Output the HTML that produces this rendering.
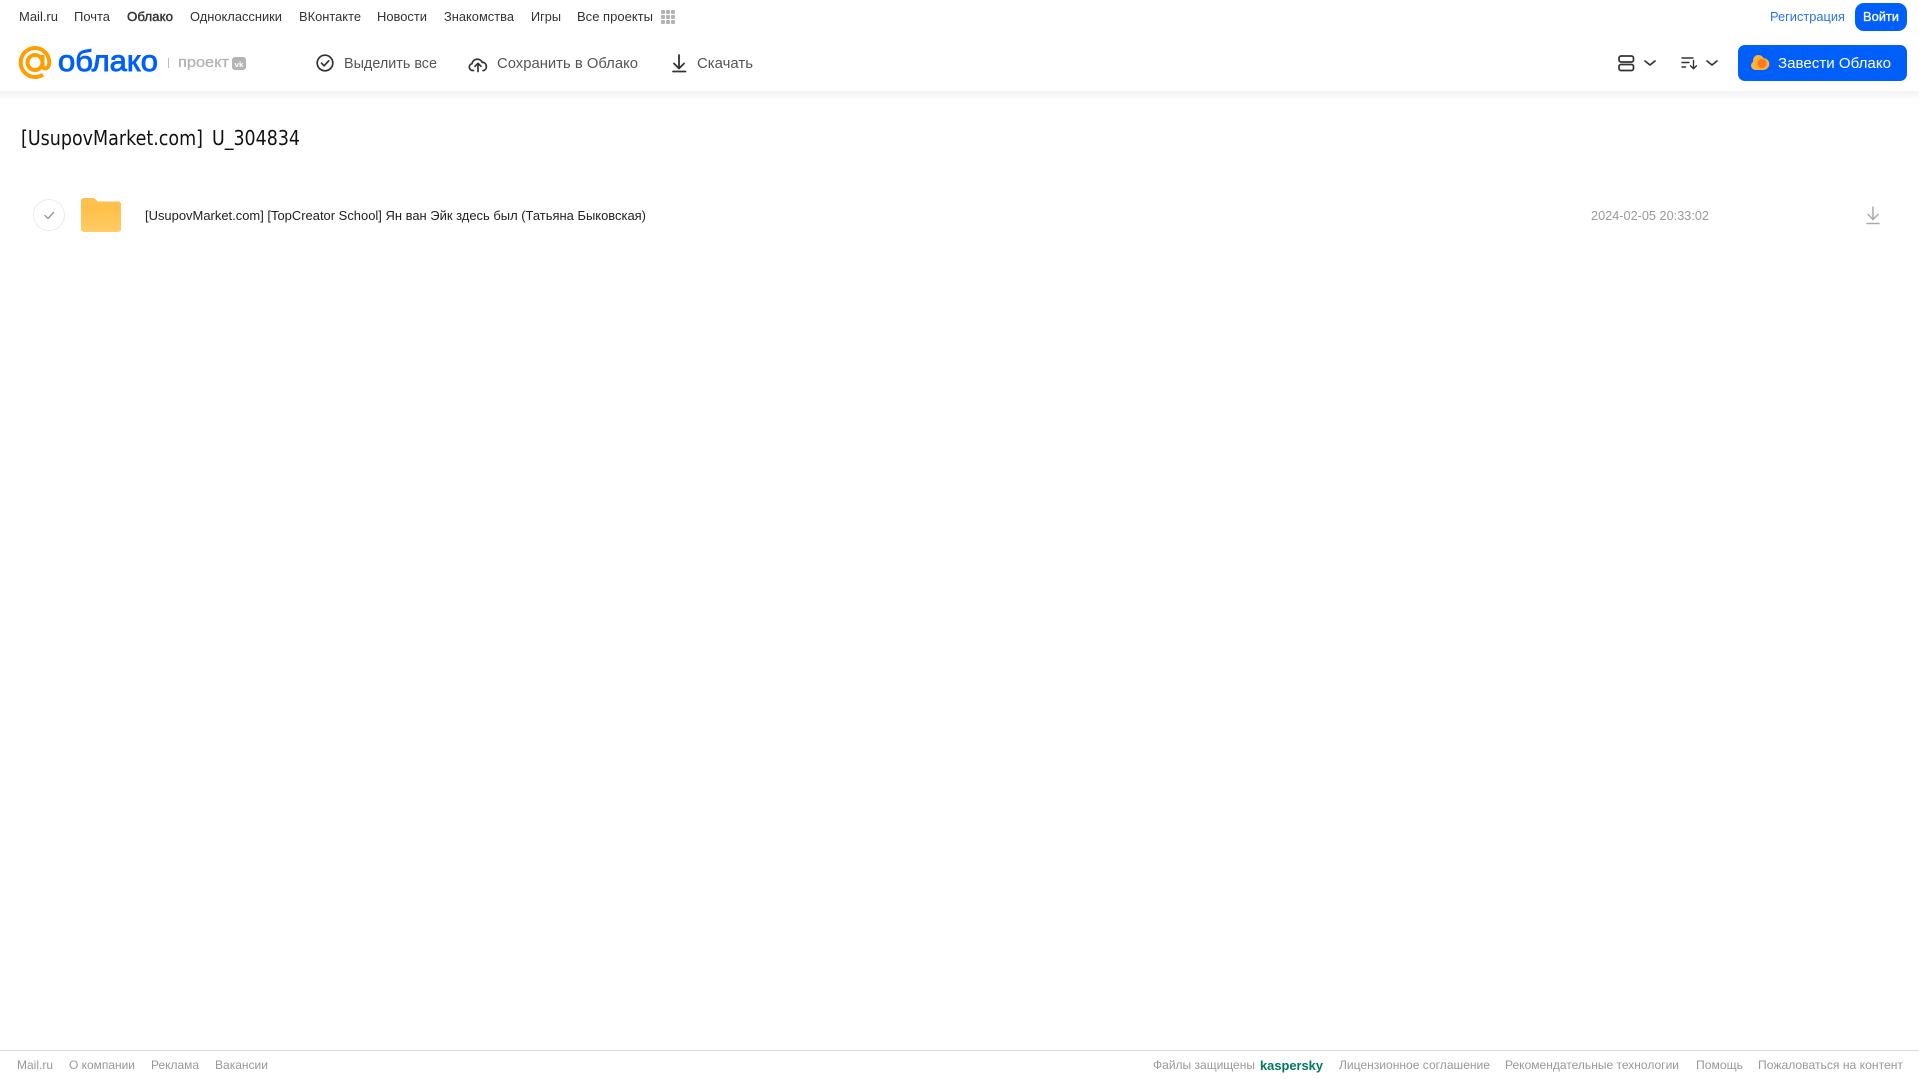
<!DOCTYPE html>
<html lang="ru">
<head>
<meta charset="utf-8">
<title>Облако</title>
<style>
html,body{margin:0;padding:0;background:#fff;width:1919px;height:1079px;overflow:hidden}
svg{display:block;position:absolute;left:0;top:0}
text{font-family:"Liberation Sans","Noto Sans CJK SC",sans-serif}
.n{font-size:13px;fill:#333}
.t{font-size:15px;fill:#555}
.f{font-size:12px;fill:#999}
</style>
</head>
<body>
<svg width="1919" height="1079" viewBox="0 0 1919 1079" xmlns="http://www.w3.org/2000/svg">
<defs>
<linearGradient id="sh" x1="0" y1="0" x2="0" y2="1"><stop offset="0" stop-color="#f3f3f3"/><stop offset="1" stop-color="#fff"/></linearGradient>
<linearGradient id="fo" x1="0" y1="0" x2="0" y2="1"><stop offset="0" stop-color="#ffbb3d"/><stop offset="1" stop-color="#ffcc66"/></linearGradient>
</defs>
<rect x="0" y="91" width="1919" height="10" fill="url(#sh)"/>

<!-- top nav -->
<text class="n" x="19" y="21" textLength="39" lengthAdjust="spacingAndGlyphs">Mail.ru</text>
<text class="n" x="74" y="21" textLength="36" lengthAdjust="spacingAndGlyphs">Почта</text>
<text class="n" x="127" y="21" textLength="46" lengthAdjust="spacingAndGlyphs" stroke="#333" stroke-width=".4">Облако</text>
<text class="n" x="190" y="21" textLength="92" lengthAdjust="spacingAndGlyphs">Одноклассники</text>
<text class="n" x="299" y="21" textLength="62" lengthAdjust="spacingAndGlyphs">ВКонтакте</text>
<text class="n" x="377" y="21" textLength="50" lengthAdjust="spacingAndGlyphs">Новости</text>
<text class="n" x="444" y="21" textLength="70" lengthAdjust="spacingAndGlyphs">Знакомства</text>
<text class="n" x="531" y="21" textLength="30" lengthAdjust="spacingAndGlyphs">Игры</text>
<text class="n" x="577" y="21" textLength="76" lengthAdjust="spacingAndGlyphs">Все проекты</text>
<g fill="#b3b3b3">
<rect x="661" y="10" width="4" height="4" rx="1"/><rect x="666" y="10" width="4" height="4" rx="1"/><rect x="671" y="10" width="4" height="4" rx="1"/>
<rect x="661" y="15" width="4" height="4" rx="1"/><rect x="666" y="15" width="4" height="4" rx="1"/><rect x="671" y="15" width="4" height="4" rx="1"/>
<rect x="661" y="20" width="4" height="4" rx="1"/><rect x="666" y="20" width="4" height="4" rx="1"/><rect x="671" y="20" width="4" height="4" rx="1"/>
</g>
<text x="1770" y="21" font-size="13" fill="#2a73e0" textLength="75" lengthAdjust="spacingAndGlyphs">Регистрация</text>
<rect x="1855" y="3" width="52" height="28" rx="9" fill="#005ff9"/>
<text x="1863" y="21" font-size="13" fill="#fff" stroke="#fff" stroke-width=".3" textLength="36" lengthAdjust="spacingAndGlyphs">Войти</text>

<!-- logo -->
<g fill="none" stroke="#ff9e00" stroke-width="4">
<circle cx="35" cy="62.500" r="7.500"/>
<path d="M42.500 55v10.500c0 4.500 6.800 4 6.800-3 0-8-6.400-14.500-14.300-14.500S20.700 54.500 20.700 62.500 27 77 35 77c3 0 5.600-.8 8-2.300"/>
</g>
<text x="58" y="71" font-size="30" fill="#005ff9" stroke="#005ff9" stroke-width=".9" textLength="100" lengthAdjust="spacingAndGlyphs">облако</text>
<rect x="168" y="58" width="1" height="10" fill="#bbb"/>
<text x="178" y="67" font-size="15" fill="#b3b3b3" stroke="#b3b3b3" stroke-width=".3" textLength="51" lengthAdjust="spacingAndGlyphs">проект</text>
<rect x="232" y="57" width="14" height="13" rx="3" fill="#b3b3b3"/>
<text x="234.500" y="67" font-size="7" font-weight="700" fill="#fff" textLength="9" lengthAdjust="spacingAndGlyphs">vk</text>

<!-- toolbar -->
<g fill="none" stroke="#333" stroke-width="1.700" stroke-linecap="round" stroke-linejoin="round">
<circle cx="325" cy="63" r="7.800"/>
<path d="M321.500 63.200l2.600 2.600 4.600-5"/>
<path d="M473.500 70.500h-.5c-4.500 0-5-5.800-1-6.800.8-5.400 8.300-6 10.200-1.300 4.500-.4 5.800 6.400 1.800 8.100h-1"/>
<path d="M478 71.500v-8M475 66.300l3-3 3 3"/>
</g>
<g fill="none" stroke="#333" stroke-width="1.800" stroke-linecap="round" stroke-linejoin="round">
<path d="M679 55v13M674 63.500l5 5 5-5"/>
<path d="M673 71.500h12.500"/>
</g>
<text class="t" x="344" y="68" textLength="93" lengthAdjust="spacingAndGlyphs">Выделить все</text>
<text class="t" x="497" y="68" textLength="141" lengthAdjust="spacingAndGlyphs">Сохранить в Облако</text>
<text class="t" x="697" y="68" textLength="56" lengthAdjust="spacingAndGlyphs">Скачать</text>

<!-- right icons -->
<g fill="none" stroke="#333" stroke-width="1.700" stroke-linecap="round" stroke-linejoin="round">
<rect x="1619" y="56" width="14.500" height="6" rx="2"/>
<rect x="1619" y="64.500" width="14.500" height="6" rx="2"/>
<path d="M1645 61l5 4 5-4"/>
<path d="M1707 61l5 4 5-4"/>
<path d="M1682 58h11M1682 62.500h7M1682 67h3.500" stroke-width="1.400"/>
<path d="M1693.500 60.500v8M1690.500 65.800l3 3 3-3" stroke-width="1.400"/>
</g>

<rect x="1738" y="45" width="169" height="36" rx="7" fill="#005ff9"/>
<g fill="#ffb13d">
<circle cx="1758.500" cy="60.500" r="5.500"/>
<circle cx="1755.500" cy="65.500" r="4.500"/>
<circle cx="1763.500" cy="64" r="5.800"/>
<rect x="1755" y="64" width="9" height="6"/>
</g>
<circle cx="1762" cy="63.500" r="4.600" fill="#ff7a1a"/>
<text x="1778" y="68" font-size="15" fill="#fff" textLength="113" lengthAdjust="spacingAndGlyphs">Завести Облако</text>

<!-- title -->
<text x="21" y="145" font-size="20" fill="#111" style="font-family:'DejaVu Sans',sans-serif" textLength="182" lengthAdjust="spacingAndGlyphs">[UsupovMarket.com]</text>
<text x="212" y="145" font-size="20" fill="#111" style="font-family:'DejaVu Sans',sans-serif" textLength="88" lengthAdjust="spacingAndGlyphs">U_304834</text>

<!-- row -->
<circle cx="49" cy="215" r="15.500" fill="#fff" stroke="#ececec" stroke-width="1"/>
<path d="M45 215.500l3 3 5.500-6" fill="none" stroke="#999" stroke-width="1.400" stroke-linecap="round" stroke-linejoin="round"/>
<path d="M81 201a3 3 0 0 1 3-3h9c2.500 0 3.500 3.500 5.500 3.500H118a3 3 0 0 1 3 3V229a3 3 0 0 1-3 3H84a3 3 0 0 1-3-3z" fill="url(#fo)"/>
<path d="M81 206h40v-1.500a3 3 0 0 0-3-3H98.500C96.500 201.500 95.500 198 93 198h-9a3 3 0 0 0-3 3z" fill="#ffc04d"/>
<text x="145" y="220" font-size="13" fill="#222" textLength="501" lengthAdjust="spacingAndGlyphs">[UsupovMarket.com] [TopCreator School] Ян ван Эйк здесь был (Татьяна Быковская)</text>
<text x="1591" y="220" font-size="13" fill="#999" textLength="118" lengthAdjust="spacingAndGlyphs">2024-02-05 20:33:02</text>
<g fill="none" stroke="#aaa" stroke-width="1.500" stroke-linecap="round" stroke-linejoin="round">
<path d="M1873 207v12M1868 214.500l5 5 5-5"/>
<path d="M1867 223.500h12"/>
</g>

<!-- footer -->
<rect x="0" y="1050" width="1919" height="1" fill="#d9d9d9"/>
<text class="f" x="17" y="1069" textLength="36" lengthAdjust="spacingAndGlyphs">Mail.ru</text>
<text class="f" x="69" y="1069" textLength="66" lengthAdjust="spacingAndGlyphs">О компании</text>
<text class="f" x="151" y="1069" textLength="48" lengthAdjust="spacingAndGlyphs">Реклама</text>
<text class="f" x="215" y="1069" textLength="53" lengthAdjust="spacingAndGlyphs">Вакансии</text>
<text class="f" x="1153" y="1069" textLength="102" lengthAdjust="spacingAndGlyphs">Файлы защищены</text>
<text x="1260" y="1070" font-size="13" font-weight="700" fill="#00785f" textLength="63" lengthAdjust="spacingAndGlyphs">kaspersky</text>
<text class="f" x="1339" y="1069" textLength="151" lengthAdjust="spacingAndGlyphs">Лицензионное соглашение</text>
<text class="f" x="1505" y="1069" textLength="174" lengthAdjust="spacingAndGlyphs">Рекомендательные технологии</text>
<text class="f" x="1696" y="1069" textLength="47" lengthAdjust="spacingAndGlyphs">Помощь</text>
<text class="f" x="1758" y="1069" textLength="145" lengthAdjust="spacingAndGlyphs">Пожаловаться на контент</text>
</svg>
</body>
</html>
